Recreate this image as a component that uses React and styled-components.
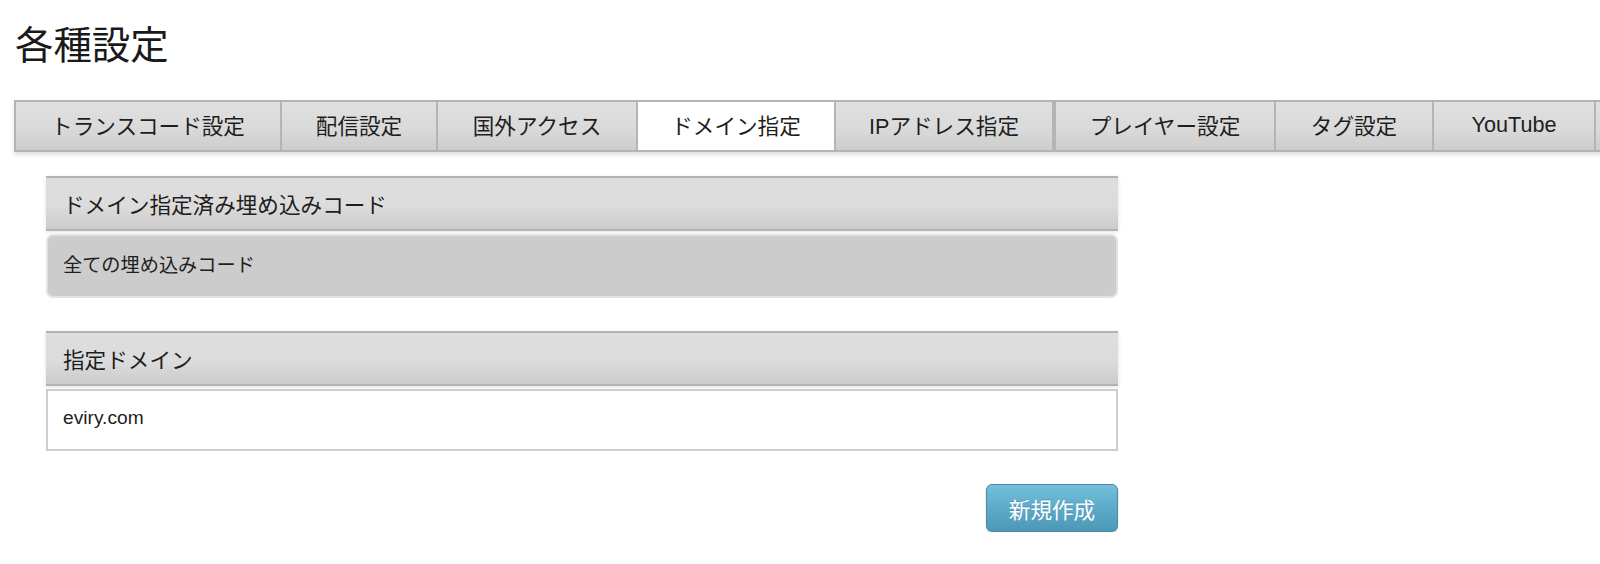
import React from 'react';
import styled, { createGlobalStyle } from 'styled-components';

/* Settings screen: tab strip across the top, domain-restriction panels below. */

const GlobalStyle = createGlobalStyle`
  html, body {
    margin: 0;
    padding: 0;
    background: #ffffff;
    overflow-x: hidden;
  }
  body {
    font-family: "Liberation Sans", "Noto Sans CJK JP", sans-serif;
    color: #222222;
  }
`;

const PageContainer = styled.div`
  padding: 23px 0 0 14px;
`;

const Title = styled.h1`
  margin: 0;
  font-size: 38.4px;
  line-height: 46px;
  font-weight: normal;
  color: #1a1a1a;
  padding-left: 1px;
`;

const TabBar = styled.ul`
  display: flex;
  width: max-content;
  margin: 31px 0 0;
  padding: 0;
  list-style: none;
  border: 2px solid #b4b4b4;
  border-right: none;
  box-shadow: 0 3px 4px rgba(0, 0, 0, 0.12);
`;

const Tab = styled.li`
  box-sizing: border-box;
  display: flex;
  align-items: center;
  justify-content: center;
  height: 48px;
  padding-bottom: 3px;
  border-right: ${p => (p.$split ? '4px' : '2px')} solid #b4b4b4;
  background: ${p =>
    p.$active ? '#ffffff' : 'linear-gradient(#e0e0e0 0%, #dadada 55%, #cdcdcd 100%)'};
  font-size: 21.6px;
  color: #1e1e1e;
  white-space: nowrap;
  cursor: pointer;
`;

const MainContent = styled.div`
  width: 1072px;
  margin: 24px 0 0 32px;
  display: flex;
  flex-direction: column;
`;

const Panel = styled.section`
  display: flex;
  flex-direction: column;
  gap: 3px;
  margin-bottom: 33px;
`;

const PanelHeader = styled.h2`
  box-sizing: border-box;
  margin: 0;
  height: 55px;
  display: flex;
  align-items: center;
  padding-left: 17px;
  border-top: 2px solid #b3b3b3;
  border-bottom: 2px solid #b3b3b3;
  background: linear-gradient(#dddddd 0%, #dcdcdc 55%, #cbcbcb 100%);
  box-shadow: 0 1px 4px rgba(0, 0, 0, 0.12);
  font-size: 21.6px;
  font-weight: normal;
  color: #1e1e1e;
`;

const PanelBody = styled.div`
  box-sizing: border-box;
  height: ${p => (p.$muted ? '64px' : '62px')};
  display: flex;
  align-items: center;
  padding: 0 0 4px 15px;
  border: 2px solid ${p => (p.$muted ? '#e2e2e2' : '#cdcdcd')};
  border-radius: ${p => (p.$muted ? '7px' : '0')};
  background: ${p => (p.$muted ? '#cccccc' : '#ffffff')};
  font-size: 19.2px;
  color: #1e1e1e;
`;

const Actions = styled.div`
  display: flex;
  justify-content: flex-end;
`;

const CreateButton = styled.button`
  box-sizing: border-box;
  width: 132px;
  height: 48px;
  border: 1px solid #4a8aa3;
  border-radius: 6px;
  background: linear-gradient(#74bfdb 0%, #5eaac9 50%, #4b97b5 100%);
  box-shadow: 0 1px 2px rgba(0, 0, 0, 0.2);
  color: #ffffff;
  font-family: inherit;
  font-size: 21.6px;
  text-shadow: 0 -1px 0 rgba(0, 0, 0, 0.15);
  cursor: pointer;
`;

const tabs = [
  { label: 'トランスコード設定', width: 266 },
  { label: '配信設定', width: 156 },
  { label: '国外アクセス', width: 200 },
  { label: 'ドメイン指定', width: 198, active: true },
  { label: 'IPアドレス指定', width: 220, split: true },
  { label: 'プレイヤー設定', width: 220 },
  { label: 'タグ設定', width: 158 },
  { label: 'YouTube', width: 162 },
];

export default function App() {
  return (
    <>
      <GlobalStyle />
      <PageContainer>
        <Title>各種設定</Title>
        <TabBar>
          {tabs.map(t => (
            <Tab
              key={t.label}
              $active={t.active}
              $split={t.split}
              style={{ width: t.width }}
            >
              {t.label}
            </Tab>
          ))}
          <Tab style={{ width: 120 }} />
        </TabBar>
        <MainContent>
          <Panel>
            <PanelHeader>ドメイン指定済み埋め込みコード</PanelHeader>
            <PanelBody $muted>全ての埋め込みコード</PanelBody>
          </Panel>
          <Panel>
            <PanelHeader>指定ドメイン</PanelHeader>
            <PanelBody>eviry.com</PanelBody>
          </Panel>
          <Actions>
            <CreateButton>新規作成</CreateButton>
          </Actions>
        </MainContent>
      </PageContainer>
    </>
  );
}
